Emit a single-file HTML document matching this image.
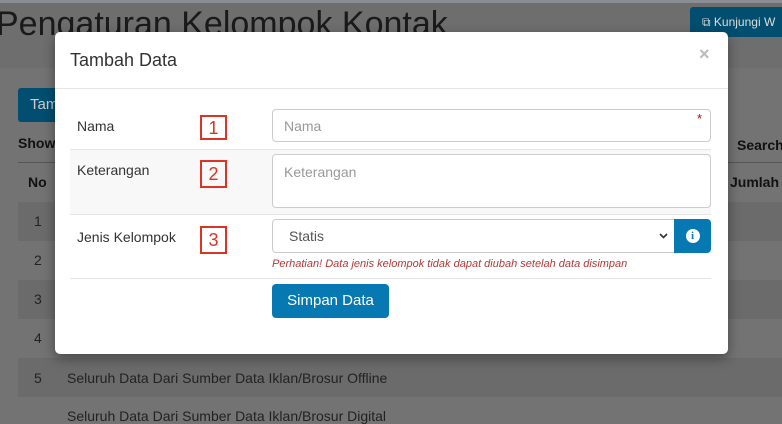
<!DOCTYPE html>
<html><head><style>
body{margin:0;width:782px;height:416px;overflow:hidden;background:#737373;font-family:"Liberation Sans",sans-serif;position:relative}
.a{position:absolute}
.t{color:#333}
</style></head><body>
<div class="a" style="left:0;top:0;width:782px;height:3px;background:#8a8d93"></div>
<div class="a" style="left:0;top:3px;width:782px;height:65px;background:#6e6e6e"></div>
<div class="a" style="left:-4px;top:5px;font-size:34px;color:#1a1a1a">Pengaturan Kelompok Kontak</div>
<div class="a" style="left:690px;top:7px;width:100px;height:30px;background:#024e70;border-radius:3px;color:#ddd;font-size:12px;line-height:30px;padding-left:12px">⧉ Kunjungi W</div>
<div class="a" style="left:18px;top:88px;width:60px;height:34px;background:#024e70;border-radius:3px;color:#ccc;font-size:15px;line-height:34px;padding-left:12px">Tam</div>
<div class="a" style="left:18px;top:135px;font-size:14px;font-weight:bold;color:#111">Show</div>
<div class="a" style="left:737px;top:137px;font-size:14px;font-weight:bold;color:#111">Search</div>
<div class="a" style="left:18px;top:162px;width:764px;height:1px;background:#555"></div>
<div class="a" style="left:28px;top:174px;font-size:14px;font-weight:bold;color:#111">No</div>
<div class="a" style="left:730px;top:174px;font-size:14px;font-weight:bold;color:#111">Jumlah</div>
<div class="a" style="left:18px;top:202px;width:764px;height:39px;background:#6b6b6b"></div>
<div class="a" style="left:18px;top:280px;width:764px;height:39px;background:#6b6b6b"></div>
<div class="a" style="left:18px;top:358px;width:764px;height:39px;background:#6b6b6b"></div>
<div class="a" style="left:34px;top:213px;font-size:14px;color:#222">1</div>
<div class="a" style="left:34px;top:252px;font-size:14px;color:#222">2</div>
<div class="a" style="left:34px;top:291px;font-size:14px;color:#222">3</div>
<div class="a" style="left:34px;top:330px;font-size:14px;color:#222">4</div>
<div class="a" style="left:34px;top:370px;font-size:14px;color:#222">5</div>
<div class="a" style="left:67px;top:370px;font-size:14px;color:#222">Seluruh Data Dari Sumber Data Iklan/Brosur Offline</div>
<div class="a" style="left:67px;top:408px;font-size:14px;color:#222">Seluruh Data Dari Sumber Data Iklan/Brosur Digital</div>

<div class="a" style="left:55px;top:32px;width:673px;height:322px;background:#fff;border-radius:5px;box-shadow:0 4px 12px rgba(0,0,0,.4)">
<div class="a t" style="left:15px;top:18px;font-size:18px">Tambah Data</div>
<div class="a" style="left:644px;top:12px;font-size:18px;color:#bbb;font-weight:bold">×</div>
<div class="a" style="left:0;top:56px;width:673px;height:1px;background:#e5e5e5"></div>
<div class="a t" style="left:22px;top:86px;font-size:14px">Nama</div>
<div class="a" style="left:145px;top:83px;width:27px;height:25px;border:2px solid #d32;box-sizing:border-box;color:#d32;font-size:18px;text-align:center;line-height:22px">1</div>
<div class="a" style="left:217px;top:77px;width:439px;height:33px;border:1px solid #ccc;border-radius:4px;color:#999;font-size:14px;line-height:33px;padding-left:11px;box-sizing:border-box">Nama</div>
<div class="a" style="left:642px;top:79px;font-size:13px;color:#c00">*</div>
<div class="a" style="left:15px;top:117px;width:641px;height:64px;background:#f8f8f8;border-top:1px solid #e5e5e5;border-bottom:1px solid #e5e5e5"></div>
<div class="a t" style="left:22px;top:130px;font-size:14px">Keterangan</div>
<div class="a" style="left:145px;top:128px;width:27px;height:28px;border:2px solid #d32;box-sizing:border-box;color:#d32;font-size:18px;text-align:center;line-height:24px">2</div>
<div class="a" style="left:217px;top:122px;width:439px;height:54px;border:1px solid #ccc;border-radius:4px;background:#fff;color:#999;font-size:14px;padding:9px 11px;box-sizing:border-box">Keterangan</div>
<div class="a t" style="left:22px;top:197px;font-size:14px">Jenis Kelompok</div>
<div class="a" style="left:145px;top:194px;width:27px;height:28px;border:2px solid #d32;box-sizing:border-box;color:#d32;font-size:18px;text-align:center;line-height:24px">3</div>
<div class="a" style="left:217px;top:187px;width:403px;height:34px;border:1px solid #ccc;border-radius:4px 0 0 4px;color:#555;font-size:14px;line-height:32px;padding-left:16px;box-sizing:border-box">Statis<svg style="position:absolute;right:6px;top:13px" width="9" height="6" viewBox="0 0 9 6"><path d="M1 1 L4.5 4.5 L8 1" stroke="#333" stroke-width="1.6" fill="none"/></svg></div>
<div class="a" style="left:619px;top:187px;width:37px;height:34px;background:#0679b3;border-radius:0 4px 4px 0"><div style="margin:10px auto;width:14px;height:14px;border-radius:50%;background:#fff;color:#0679b3;font-size:11px;font-weight:bold;text-align:center;line-height:14px;font-family:'Liberation Serif',serif">i</div></div>
<div class="a" style="left:217px;top:226px;font-size:11px;font-style:italic;color:#b03a3a">Perhatian! Data jenis kelompok tidak dapat diubah setelah data disimpan</div>
<div class="a" style="left:15px;top:246px;width:641px;height:1px;background:#e5e5e5"></div>
<div class="a" style="left:217px;top:252px;width:117px;height:34px;background:#0679b3;border-radius:4px;color:#fff;font-size:15px;line-height:34px;text-align:center">Simpan Data</div>
</div>
</body></html>
